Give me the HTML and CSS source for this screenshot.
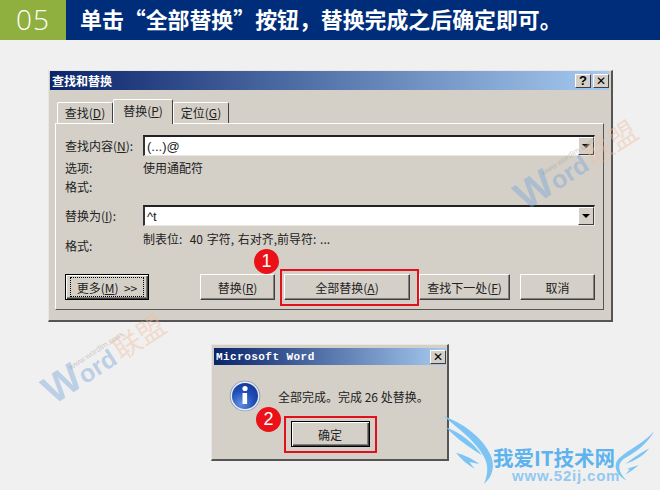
FILE: index.html
```html
<!DOCTYPE html>
<html lang="zh-CN">
  <head>
    <meta charset="UTF-8" />
    <title>全部替换</title>
    <link rel="stylesheet" href="styles.css">
  </head>
  <body>
    <header class="step">
      <div class="step-num">05</div>
      <h1 class="step-title">单击“全部替换”按钮，替换完成之后确定即可。</h1>
    </header>

    <div class="dialog dialog-find">
      <div class="titlebar">
        <span class="title-text">查找和替换</span>
        <span class="title-btn">?</span>
        <span class="title-btn title-x">✕</span>
      </div>

      <div class="tabs">
        <div class="tab">查找(<u>D</u>)</div>
        <div class="tab tab-active">替换(<u>P</u>)</div>
        <div class="tab">定位(<u>G</u>)</div>
      </div>

      <div class="panel">
        <div class="fields">
          <div class="label">查找内容(<u>N</u>):</div>
          <div class="input"><span>(...)@</span><span class="arrow"></span></div>
          <div class="label">选项:</div>
          <div class="value">使用通配符</div>
          <div class="label label-top">格式:</div>
          <div class="value"></div>
          <div class="label">替换为(<u>I</u>):</div>
          <div class="input"><span>^t</span><span class="arrow"></span></div>
          <div class="label label-end">格式:</div>
          <div class="value value-top">制表位:&nbsp; 40 字符, 右对齐,前导符: ...</div>
        </div>

        <div class="buttons">
          <div class="button button-default button-more"><span class="focus">更多(<u>M</u>) &nbsp;&gt;&gt;</span></div>
          <div class="button button-replace">替换(<u>R</u>)</div>
          <div class="button button-all">全部替换(<u>A</u>)</div>
          <div class="button button-next">查找下一处(<u>F</u>)</div>
          <div class="button button-cancel">取消</div>
        </div>
      </div>

      <div class="red-box red-box-all"></div>
      <div class="badge badge-one">1</div>
    </div>

    <div class="dialog dialog-done">
      <div class="titlebar">
        <span class="title-text title-mono">Microsoft Word</span>
        <span class="title-btn title-x">✕</span>
      </div>
      <div class="message">
        <svg class="info-icon" width="32" height="32" viewBox="0 0 32 32">
          <defs>
            <radialGradient id="infoBlue" cx="0.35" cy="0.8" r="0.9">
              <stop offset="0" stop-color="#5f8fe0" />
              <stop offset="0.55" stop-color="#1f4fb8" />
              <stop offset="1" stop-color="#16348c" />
            </radialGradient>
          </defs>
          <circle cx="16" cy="16" r="15.3" fill="#8a9bb8" />
          <circle cx="16" cy="16" r="14.4" fill="#e8eef6" />
          <circle cx="16" cy="16" r="13" fill="url(#infoBlue)" />
          <circle cx="16" cy="8.5" r="2.6" fill="#fff" />
          <path d="M13.5 13h4.6v11h-4.6z" fill="#fff" />
        </svg>
        <div class="message-text">全部完成。完成 26 处替换。</div>
      </div>
      <div class="done-row">
        <div class="button button-default button-ok">确定</div>
      </div>
      <div class="red-box red-box-ok"></div>
      <div class="badge badge-two">2</div>
    </div>

    <!-- watermarks -->
    <div class="stamp stamp-top"><b class="stamp-w">W</b><b class="stamp-ord">ord</b><span class="stamp-cn">联盟</span><span class="stamp-url">www.wordlm.com</span></div>
    <div class="stamp stamp-bottom"><b class="stamp-w">W</b><b class="stamp-ord">ord</b><span class="stamp-cn">联盟</span><span class="stamp-url">www.wordlm.com</span></div>

    <div class="logo">
      <svg class="logo-wings" width="220" height="90" viewBox="0 0 660 270">
        <path d="M12 48C70 72 125 108 152 165C166 198 158 230 132 252C144 222 146 196 132 170C105 120 55 88 12 48Z" />
        <path d="M18 82C60 98 100 128 126 166C95 146 55 122 18 82Z" />
        <path d="M48 158C75 165 100 178 118 192L88 186L104 206C85 195 65 180 48 158Z" />
        <path d="M642 94C625 128 590 156 552 176C532 190 532 214 560 242C530 226 518 200 534 178C565 148 612 130 642 94Z" />
        <path d="M628 145C610 168 585 182 556 192C576 176 600 160 628 145Z" />
        <path d="M596 196C585 205 572 215 556 224L570 208L560 208C572 203 585 198 596 196Z" />
      </svg>
      <div class="logo-name">我爱IT技术网</div>
      <div class="logo-url">www.52ij.com</div>
    </div>
  </body>
</html>
```

FILE: styles.css
```css
* {
  margin: 0;
  padding: 0;
  box-sizing: border-box;
}

body {
  width: 660px;
  height: 490px;
  overflow: hidden;
  position: relative;
  background-color: #f0f0f0;
  font-family: "Noto Sans CJK SC", "Liberation Sans", sans-serif;
  font-size: 12px;
  color: #222;
}

/* header band */
.step {
  display: flex;
  height: 40px;
  background-color: #002d7a;
}

.step-num {
  width: 66px;
  background-color: #8fb03e;
  color: #fff;
  font-family: "Open Sans", sans-serif;
  font-weight: 300;
  font-size: 28px;
  letter-spacing: 1px;
  line-height: 38px;
  text-align: center;
}

.step-title {
  margin-left: 14px;
  color: #fff;
  font-size: 21.9px;
  font-weight: 700;
  line-height: 38px;
  white-space: nowrap;
}

/* windows */
.dialog {
  position: relative;
  background-color: #d4d0c8;
  border-top: 1px solid #e8e6e0;
  border-left: 1px solid #e8e6e0;
  border-right: 2px solid #555;
  border-bottom: 2px solid #555;
}

.dialog-find {
  width: 565px;
  height: 252px;
  margin: 30px 0 0 48px;
  padding: 0 2px 0 1px;
}

.dialog-done {
  width: 238px;
  height: 117px;
  margin: 22px 0 0 211px;
  padding: 3px 1px 0 2px;
}

.titlebar {
  display: flex;
  align-items: center;
  height: 19px;
  padding: 0 0 0 2px;
  background: linear-gradient(to right, #0a246a, #a6caf0);
}

.dialog-done .titlebar {
  height: 17px;
}

.title-text {
  flex: 1;
  color: #fff;
  font-size: 12px;
  font-weight: 700;
}

.title-mono {
  font-family: "Liberation Mono", monospace;
  font-size: 11px;
  letter-spacing: 0.45px;
}

.title-btn {
  width: 16px;
  height: 14px;
  margin-left: 2px;
  background-color: #d4d0c8;
  border-top: 1px solid #fff;
  border-left: 1px solid #fff;
  border-right: 1px solid #404040;
  border-bottom: 1px solid #404040;
  color: #000;
  font-family: "Liberation Sans", sans-serif;
  font-size: 13px;
  font-weight: 700;
  line-height: 12px;
  text-align: center;
}

.title-x {
  font-family: "DejaVu Sans", sans-serif;
  font-size: 12px;
  font-weight: 700;
}

/* tabs */
.tabs {
  display: flex;
  align-items: flex-end;
  height: 33px;
  margin-left: 7px;
}

.tab {
  width: 56px;
  height: 21px;
  background-color: #d4d0c8;
  border-top: 1px solid #fff;
  border-left: 1px solid #fff;
  border-right: 1px solid #404040;
  border-radius: 2px 2px 0 0;
  font-size: 12px;
  line-height: 20px;
  text-align: center;
}

.tab-active {
  position: relative;
  z-index: 1;
  width: 60px;
  height: 25px;
  margin-bottom: -1px;
  line-height: 21px;
}

.panel {
  height: 187px;
  margin: 0 5px 0 5px;
  padding: 11px 8px 0 9px;
  border-top: 1px solid #fff;
  border-left: 1px solid #fff;
  border-right: 1px solid #555;
  border-bottom: 1px solid #555;
}

.fields {
  display: grid;
  grid-template-columns: 78px 1fr;
  grid-template-rows: 21px 22px 27px 21px 28px;
  margin-bottom: 20px;
}

.label,
.value {
  display: flex;
  align-items: center;
}

.label-top {
  align-items: flex-start;
}

.label-end {
  align-items: flex-end;
}

.value-top {
  align-items: flex-start;
  padding-top: 4px;
  word-spacing: 1px;
}

.input {
  display: flex;
  align-items: center;
  justify-content: space-between;
  background-color: #fff;
  border-top: 2px solid #222;
  border-left: 2px solid #333;
  border-right: 1px solid #ece9e2;
  border-bottom: 1px solid #ece9e2;
  padding-left: 2px;
  font-family: "Liberation Sans", sans-serif;
  font-size: 13px;
}

.arrow {
  position: relative;
  width: 16px;
  height: 18px;
  background-color: #d4d0c8;
  border-top: 1px solid #fff;
  border-left: 1px solid #fff;
  border-right: 1px solid #404040;
  border-bottom: 1px solid #404040;
}

.arrow::after {
  content: "";
  position: absolute;
  left: 3px;
  top: 6px;
  border-left: 4px solid transparent;
  border-right: 4px solid transparent;
  border-top: 4px solid #000;
}

/* buttons */
.buttons {
  display: flex;
  gap: 9px;
  height: 26px;
}

.button {
  display: flex;
  align-items: center;
  justify-content: center;
  height: 26px;
  background-color: #d4d0c8;
  border-top: 1px solid #fff;
  border-left: 1px solid #fff;
  border-right: 1px solid #404040;
  border-bottom: 1px solid #404040;
  box-shadow: inset -1px -1px 0 #808080;
  font-size: 12px;
}

.button-default {
  border: 1px solid #000;
  box-shadow: inset 1px 1px 0 #fff, inset -1px -1px 0 #404040, inset -2px -2px 0 #808080;
}

.focus {
  display: flex;
  align-items: center;
  justify-content: center;
  width: 72px;
  height: 18px;
  outline: 1px dotted #000;
}

.button-more { width: 84px; }
.button-replace { width: 75px; margin-left: auto; }
.button-all { width: 126px; }
.button-next { width: 91px; }
.button-cancel { width: 75px; margin-left: 1px; }
.button-ok { width: 79px; }

/* message box */
.message {
  display: flex;
  align-items: center;
  gap: 17px;
  padding: 15px 0 0 15px;
}

.done-row {
  display: flex;
  justify-content: center;
  margin-top: 9px;
}

/* step marks over the windows */
.red-box {
  position: absolute;
  border: 2px solid #e1101c;
}

.red-box-all {
  left: 231px;
  top: 198px;
  width: 139px;
  height: 37px;
}

.red-box-ok {
  left: 72px;
  top: 71px;
  width: 93px;
  height: 37px;
}

.badge {
  position: absolute;
  width: 25px;
  height: 25px;
  border-radius: 50%;
  background-color: #ea1119;
  color: #fff;
  font-family: "Liberation Sans", sans-serif;
  font-size: 18px;
  line-height: 25px;
  text-align: center;
}

.badge-one {
  left: 205px;
  top: 178px;
}

.badge-two {
  left: 44px;
  top: 62px;
}

/* watermarks */
.stamp {
  position: absolute;
  display: flex;
  align-items: baseline;
  height: 50px;
  white-space: nowrap;
  transform: rotate(-33deg);
  transform-origin: left bottom;
  font-family: "Liberation Sans", sans-serif;
  color: rgba(120, 165, 215, 0.45);
  pointer-events: none;
}

.stamp-top {
  left: 533px;
  top: 173px;
}

.stamp-bottom {
  left: 61px;
  top: 367px;
}

.stamp-w {
  font-size: 40px;
}

.stamp-ord {
  font-size: 25px;
}

.stamp-cn {
  margin-left: 3px;
  font-family: "Noto Sans CJK SC", sans-serif;
  font-size: 28px;
  color: rgba(240, 190, 160, 0.45);
}

.stamp-url {
  position: absolute;
  left: 34px;
  top: 9px;
  font-size: 8px;
  color: rgba(150, 150, 150, 0.45);
}

/* bottom right logo */
.logo {
  position: absolute;
  left: 440px;
  top: 400px;
  width: 220px;
  height: 90px;
  color: #5db3ee;
  text-align: center;
}

.logo-wings {
  position: absolute;
  left: 0;
  top: 0;
  fill: #7cc4f4;
}

.logo-name {
  position: absolute;
  left: 53px;
  top: 46px;
  font-size: 20.5px;
  font-weight: 700;
  line-height: 22px;
  white-space: nowrap;
}

.logo-url {
  position: absolute;
  left: 72px;
  top: 69px;
  font-family: "Liberation Sans", sans-serif;
  font-size: 15px;
  font-weight: 700;
  letter-spacing: 0.8px;
  line-height: 13px;
  color: #93c9f0;
  white-space: nowrap;
}
```
